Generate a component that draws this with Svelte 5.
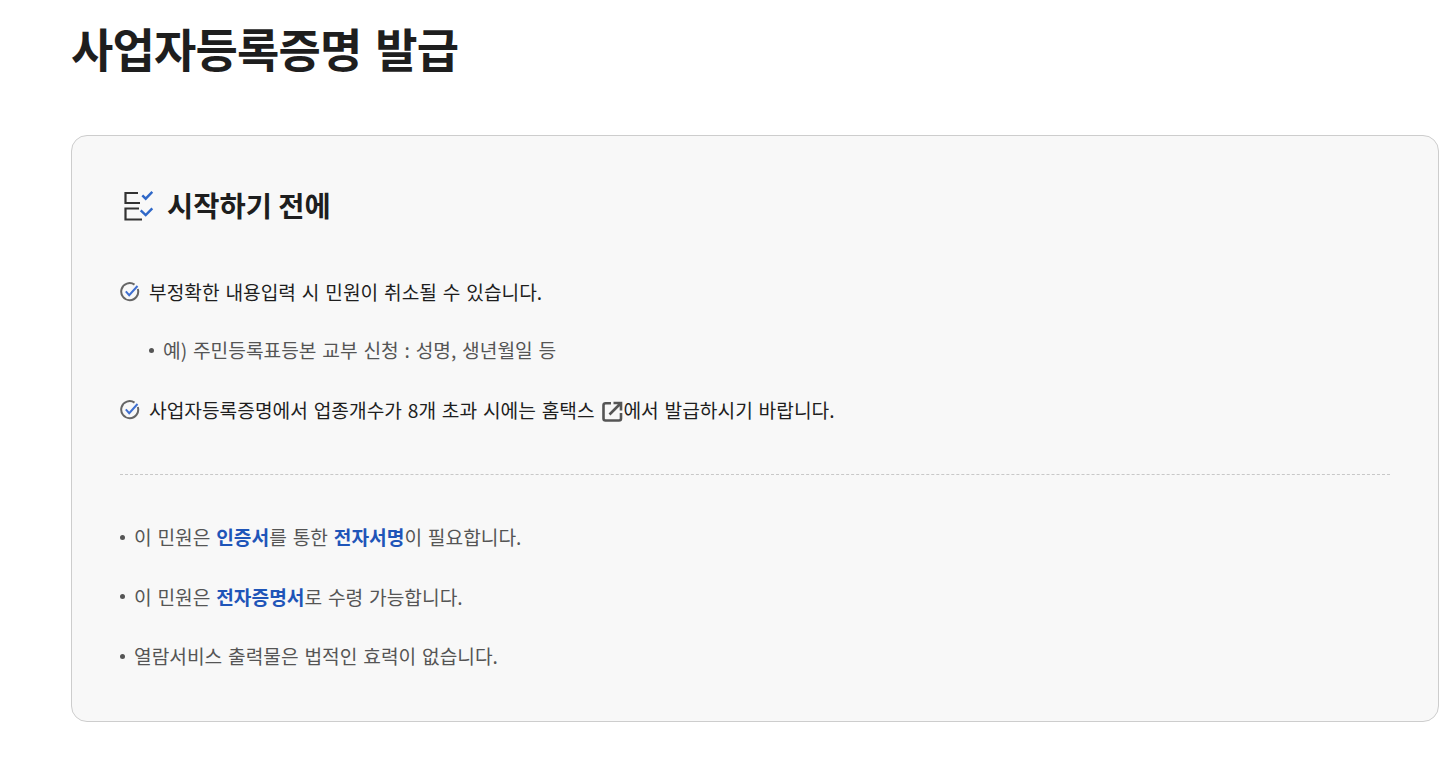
<script>
  const notes = [
    { before: '이 민원은 ', a: '인증서', mid: '를 통한 ', b: '전자서명', after: '이 필요합니다.' },
    { before: '이 민원은 ', a: '전자증명서', mid: '로 수령 가능합니다.' },
    { before: '열람서비스 출력물은 법적인 효력이 없습니다.' }
  ];
</script>

<main class="page">
  <h1>사업자등록증명 발급</h1>

  <section class="card">
    <h2>
      <svg class="list-icon" width="32" height="32" viewBox="0 0 32 32" fill="none">
        <path d="M15 3H2.500V13H17M16 18.500H2.500V29.500H19" stroke="#333" stroke-width="2.200"/>
        <path d="M19.300 5.300l3.400 3.400 6.600-6.800M17.700 20.300l5 4.800 6.600-6.800" stroke="#2f68c8" stroke-width="2.400"/>
      </svg>
      <span class="title">시작하기 전에</span>
    </h2>

    <div class="check-row">
      <svg class="check" width="20" height="20" viewBox="0 0 20 20" fill="none">
        <path d="M17.800 7A8.500 8.500 0 1 1 14.500 2.600" stroke="#666" stroke-width="2"/>
        <path d="M5.800 9.400l3.400 3.800 8.300-9.200" stroke="#3f6fd0" stroke-width="2"/>
      </svg>
      부정확한 내용입력 시 민원이 취소될 수 있습니다.
    </div>
    <div class="sub-row"><span class="dot"></span>예) 주민등록표등본 교부 신청 : 성명, 생년월일 등</div>
    <div class="check-row">
      <svg class="check" width="20" height="20" viewBox="0 0 20 20" fill="none">
        <path d="M17.800 7A8.500 8.500 0 1 1 14.500 2.600" stroke="#666" stroke-width="2"/>
        <path d="M5.800 9.400l3.400 3.800 8.300-9.200" stroke="#3f6fd0" stroke-width="2"/>
      </svg>
      <span>사업자등록증명에서 업종개수가 8개 초과 시에는 홈택스 <svg class="ext" width="21" height="21" viewBox="0 0 21 21" fill="none">
        <path d="M9 2.200H3.500A2 2 0 0 0 1.500 4.200v13.300a2 2 0 0 0 2 2H17a2 2 0 0 0 2-2V12" stroke="#555" stroke-width="2.600"/>
        <path d="M7.500 13.500L18.500 2.500M11.500 2H19V9.500" stroke="#555" stroke-width="2.600"/>
      </svg>에서 발급하시기 바랍니다.</span>
    </div>

    <hr />

    {#each notes as n}
      <div class="note">
        <span class="dot"></span>
        <span>{n.before}{#if n.a}<b>{n.a}</b>{/if}{n.mid ?? ''}{#if n.b}<b>{n.b}</b>{/if}{n.after ?? ''}</span>
      </div>
    {/each}
  </section>
</main>

<style>
  :global(body) {
    margin: 0;
    background: #fff;
    font-family: "Noto Sans CJK KR", "Noto Sans", sans-serif;
  }
  .page {
    padding: 0 11px 0 71px;
  }
  h1 {
    margin: 0;
    padding-top: 13px;
    height: 135px;
    box-sizing: border-box;
    font-size: 46px;
    line-height: 68px;
    font-weight: 700;
    letter-spacing: -0.8px;
    word-spacing: 4px;
    color: #1e1e1e;
  }
  .card {
    box-sizing: border-box;
    height: 587px;
    padding: 48px;
    border: 1px solid #cdcdcd;
    border-radius: 16px;
    background: #f8f8f8;
  }
  h2 {
    display: flex;
    align-items: center;
    gap: 12px;
    margin: 0 0 49px;
    height: 44px;
    font-size: 28.500px;
    font-weight: 700;
    color: #1e1e1e;
  }
  .list-icon {
    margin-left: 3px;
  }
  .title {
    margin-bottom: 4px;
  }
  .check-row, .sub-row, .note {
    font-size: 19.200px;
    word-spacing: 1.500px;
  }
  .check-row {
    display: flex;
    align-items: center;
    gap: 9px;
    height: 30px;
    color: #1e1e1e;
  }
  .check {
    flex: none;
  }
  .ext {
    vertical-align: -4px;
    margin-left: 2px;
  }
  .sub-row {
    display: flex;
    align-items: center;
    margin: 28px 0 30px;
    padding-left: 29px;
    height: 30px;
    color: #555;
  }
  .dot {
    flex: none;
    width: 5px;
    height: 5px;
    margin-right: 9px;
    border-radius: 50%;
    background: #555;
  }
  hr {
    margin: 49px 0 47px;
    border: 0;
    border-top: 1px dashed #c8c8c8;
  }
  .note {
    display: flex;
    align-items: center;
    height: 30px;
    margin-bottom: 29.500px;
    color: #555;
  }
  b {
    font-weight: 700;
    color: #1f55b8;
  }
</style>
